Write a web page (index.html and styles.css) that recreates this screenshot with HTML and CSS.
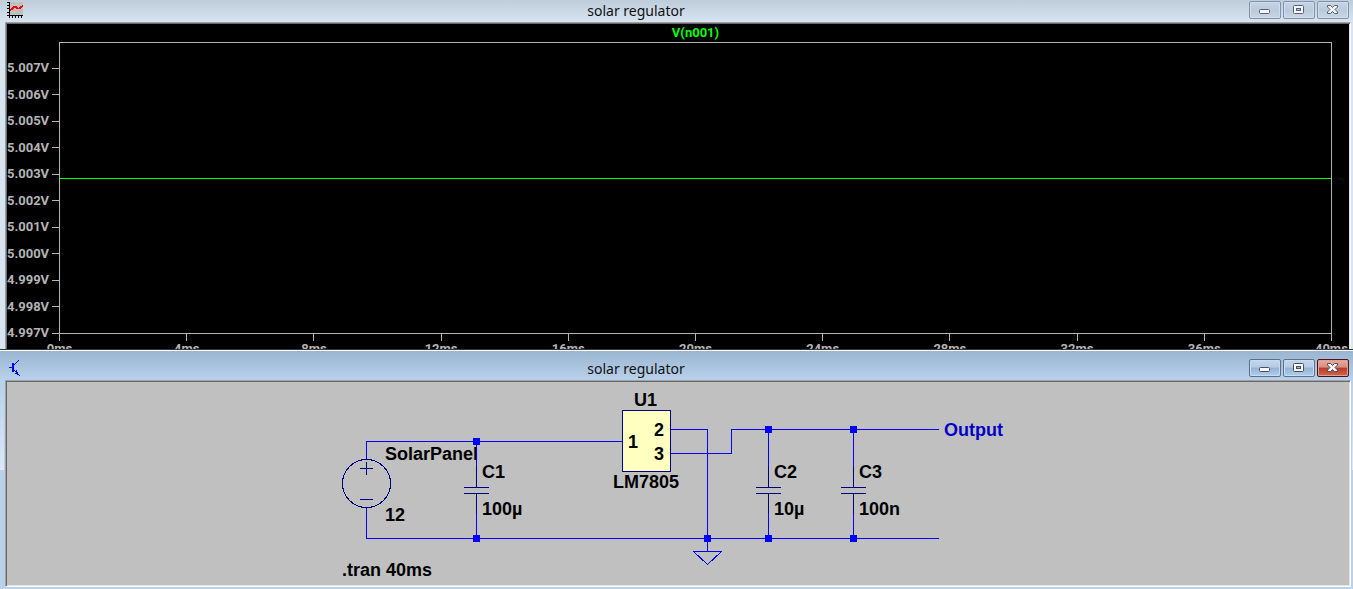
FILE: index.html
```
<!DOCTYPE html>
<html lang="en">
<head>
<meta charset="utf-8">
<title>solar regulator</title>
<link rel="stylesheet" href="styles.css">
</head>
<body>
<section class="window window--plot">
  <header class="titlebar">
    <svg class="icon" width="16" height="16" viewBox="0 0 16 16" shape-rendering="crispEdges" aria-hidden="true">
      <rect x="2" width="14" height="14" fill="#c0c0c0"/>
      <path d="M2 0h1v16h-1zM0 0h2v1h-2zM0 3h2v1h-2zM0 6h2v1h-2zM0 10h2v1h-2zM0 13h16v1H0zM5 14h1v2h-1zM8 14h1v2h-1zM11 14h1v2h-1zM14 14h1v2h-1z" fill="#000"/>
      <path d="M3 7h1v2h-1zM4 6h2v2h-2zM5 5h2v2h-2zM6 4h4v2h-4zM9 5h2v2h-2zM10 6h3v1h-3zM12 5h2v2h-2zM13 4h2v2h-2zM15 3h1v2h-1z" fill="#f00"/>
    </svg>
    <h1 class="title">solar regulator</h1>
    <div class="controls">
      <button class="control" aria-label="Minimize"><svg width="14" height="12" viewBox="0 0 14 12"><rect x="1.500" y="5.500" width="10" height="4" rx="1" fill="#f4f4f4" stroke="#586173"/></svg></button>
      <button class="control" aria-label="Restore"><svg width="14" height="12" viewBox="0 0 14 12"><rect x="1.500" y="1.500" width="10" height="8" rx="1" fill="#f4f4f4" stroke="#586173"/><rect x="4.500" y="4.500" width="4" height="2" fill="#a9bdd4" stroke="#586173"/></svg></button>
      <button class="control" aria-label="Close"><svg width="14" height="12" viewBox="0 0 14 12"><path d="M1.500 1.500H4.500L6.500 3.500L8.500 1.500H11.500V3L9 5.500L11.500 8V9.500H8.500L6.500 7.500L4.500 9.500H1.500V8L4 5.500L1.500 3Z" fill="#f4f4f4" stroke="#586173"/></svg></button>
    </div>
  </header>
  <div class="client plot">
    <h2 class="trace-name">V(n001)</h2>
    <ul class="y-axis">
      <li>5.007V</li><li>5.006V</li><li>5.005V</li><li>5.004V</li><li>5.003V</li><li>5.002V</li><li>5.001V</li><li>5.000V</li><li>4.999V</li><li>4.998V</li><li>4.997V</li>
    </ul>
    <div class="frame">
      <svg class="trace" width="100%" height="100%" role="img" aria-label="V(n001) constant at 5.0028V"><line x1="0" y1="46.700%" x2="100%" y2="46.700%" stroke="#0f0" shape-rendering="crispEdges"/></svg>
    </div>
    <ul class="x-axis">
      <li>0ms</li><li>4ms</li><li>8ms</li><li>12ms</li><li>16ms</li><li>20ms</li><li>24ms</li><li>28ms</li><li>32ms</li><li>36ms</li><li>40ms</li>
    </ul>
  </div>
</section>

<section class="window window--active">
  <header class="titlebar">
    <svg class="icon" width="16" height="16" viewBox="0 0 16 16" shape-rendering="crispEdges" aria-hidden="true">
      <path d="M5 3h2v9h-2zM2 7h3v1h-3zM7 4h1v1h-1zM8 3h1v1h-1zM9 2h1v1h-1zM10 1h1v1h-1zM11 0h1v1h-1zM7 10h1v1h-1zM8 11h2v1h-2zM9 10h1v4h-1zM10 12h1v3h-1zM8 13h3v1h-3zM11 14h1v1h-1zM12 15h1v1h-1z" fill="#00f"/>
    </svg>
    <h1 class="title">solar regulator</h1>
    <div class="controls">
      <button class="control" aria-label="Minimize"><svg width="14" height="12" viewBox="0 0 14 12"><rect x="1.500" y="5.500" width="10" height="4" rx="1" fill="#f8f8f8" stroke="#48505e"/></svg></button>
      <button class="control" aria-label="Restore"><svg width="14" height="12" viewBox="0 0 14 12"><rect x="1.500" y="1.500" width="10" height="8" rx="1" fill="#f8f8f8" stroke="#48505e"/><rect x="4.500" y="4.500" width="4" height="2" fill="#9cb9d8" stroke="#48505e"/></svg></button>
      <button class="control control--close" aria-label="Close"><svg width="14" height="12" viewBox="0 0 14 12"><path d="M1.500 1.500H4.500L6.500 3.500L8.500 1.500H11.500V3L9 5.500L11.500 8V9.500H8.500L6.500 7.500L4.500 9.500H1.500V8L4 5.500L1.500 3Z" fill="#f8f8f8" stroke="#48505e"/></svg></button>
    </div>
  </header>
  <div class="client schematic">
    <svg class="circuit" width="1000" height="203" viewBox="7 382 1000 203" role="img" aria-label="Solar panel regulator circuit">
      <g class="label">
        <text x="385" y="460">SolarPanel</text>
        <text x="385" y="521">12</text>
        <text x="482" y="478">C1</text>
        <text x="482" y="515">100µ</text>
        <text x="634" y="406">U1</text>
        <text x="613" y="488">LM7805</text>
        <text x="774" y="478">C2</text>
        <text x="774" y="515">10µ</text>
        <text x="859" y="478">C3</text>
        <text x="859" y="515">100n</text>
        <text x="342" y="576">.tran 40ms</text>
        <text class="net" x="944" y="436">Output</text>
      </g>
      <path class="wire" d="M366.500 460V441.500H622M366.500 507V538.500H939M671 429.500H707.500V551M671 453.500H731.500V429.500H939M476.500 441V466M476.500 514V538M768.500 429V466M768.500 514V538M853.500 429V466M853.500 514V538"/>
      <path class="wire" d="M693 551.500H722"/>
      <path class="wire" d="M693.500 551.500L707.500 564.500L721.500 551.500"/>
      <path class="part" d="M476.500 466V487M464 487.500H489M464 493.500H489M476.500 493V514M768.500 466V487M756 487.500H781M756 493.500H781M768.500 493V514M853.500 466V487M841 487.500H866M841 493.500H866M853.500 493V514M360 468.500H373M366.500 462V475M360 499.500H373"/>
      <circle class="part" cx="366.500" cy="483.500" r="24"/>
      <rect class="part chip" x="622.500" y="410.500" width="48" height="61"/>
      <g class="label">
        <text x="628" y="448">1</text>
        <text x="654" y="436">2</text>
        <text x="654" y="460">3</text>
      </g>
      <path class="node" d="M473 438h7v7h-7zM473 535h7v7h-7zM704 535h7v7h-7zM765 426h7v7h-7zM765 535h7v7h-7zM850 426h7v7h-7zM850 535h7v7h-7z"/>
    </svg>
  </div>
</section>
</body>
</html>
```
FILE: styles.css
```
* { box-sizing: border-box; }

body {
  margin: 0;
  min-height: 100vh;
  display: flex;
  flex-direction: column;
  font-family: "Noto Sans", sans-serif;
  background: #d7e4f2;
}

h1, h2, ul { margin: 0; padding: 0; list-style: none; }

.window {
  display: flex;
  flex-direction: column;
  padding: 0 2px 0 5px;
  background: #d7e4f2;
}

.window--plot { flex: 1; min-height: 349px; }

.window--active {
  padding-bottom: 2px;
  border-top: 1px solid #333;
  background:
    linear-gradient(#b9d1ea, #dce9f6) 0 32px / 4px 88px no-repeat,
    linear-gradient(#b9d1ea, #dce9f6) 100% 32px / 1px 88px no-repeat,
    linear-gradient(#99b4d1, #b9d1ea) 0 0 / 100% 30px no-repeat,
    #b9d1ea;
  box-shadow: inset 0 1px #fff;
}

.window--plot {
  background: linear-gradient(#bfcddb, #d7e4f2) 0 0 / 100% 22px no-repeat, #d7e4f2;
}

.titlebar {
  display: flex;
  align-items: center;
  height: 22px;
  padding: 0 2px;
}

.window--active .titlebar { height: 30px; padding-top: 8px; }

.icon { flex: none; margin-bottom: 2px; }

.title {
  flex: 1;
  text-align: center;
  font-size: 14px;
  font-weight: 400;
  line-height: 22px;
  color: #111;
}

.controls { display: flex; gap: 2px; margin-bottom: 2px; }

.control {
  display: flex;
  align-items: center;
  justify-content: center;
  width: 32px;
  height: 18px;
  padding: 0;
  border: 1px solid #8292af;
  border-radius: 2px;
  background: linear-gradient(#c7d5e4, #bccbdc 50%, #b9c9db 50%, #c9d8e8);
  box-shadow: inset 0 0 0 1px #cfdceb;
}

.window--active .control {
  border-color: #5d6f8c;
  background: linear-gradient(#c3d7ec, #b3cbe4 45%, #94b3d4 50%, #b0cfec);
  box-shadow: inset 0 0 0 1px #c8dcf0;
}

.window--active .control--close {
  border-color: #431422;
  background: linear-gradient(#e8aca0, #d98c80 45%, #b83b25 50%, #d0664f);
  box-shadow: inset 0 0 0 1px #e2a091;
}

.client {
  flex: 1;
  border: 1px solid;
  border-color: #a0a0a0 #fff #fff #a0a0a0;
}

.plot {
  display: grid;
  grid-template: 18px 1fr 15px / 52px 1fr 17px;
  border-bottom: 0;
  background: #000;
  color: #b4b4b4;
  font: 700 13px/16px Roboto, sans-serif;
  box-shadow: inset 1px 1px #696969, inset -1px 0 #e3e3e3;
  padding: 1px 1px 0;
  overflow: hidden;
}

.trace-name {
  grid-area: 1 / 2;
  text-align: center;
  font-size: 13px;
  font-weight: 700;
  line-height: 18px;
  color: #0f0;
}

.y-axis {
  grid-area: 2 / 1;
  display: flex;
  flex-direction: column;
  justify-content: space-between;
  margin: 18px 0 -7px;
}

.y-axis li {
  display: flex;
  align-items: center;
  justify-content: space-between;
}

.y-axis li::after { content: ""; width: 7px; height: 1px; background: #b4b4b4; }

.frame { grid-area: 2 / 2; border: 1px solid #b4b4b4; }

.trace { display: block; }

.x-axis {
  grid-area: 3 / 2;
  display: flex;
  justify-content: space-between;
}

.x-axis li {
  display: flex;
  flex-direction: column;
  align-items: center;
  width: 1px;
  white-space: nowrap;
}

.x-axis li::before { content: ""; flex: none; width: 1px; height: 7px; background: #b4b4b4; }

.schematic {
  padding: 1px;
  background: #c0c0c0;
  box-shadow: inset 1px 1px #696969, inset -1px -1px #e3e3e3;
}

.circuit { display: block; }

.label { font: 700 18px "Liberation Sans", Arial, sans-serif; fill: #000; }
.net { fill: #0000c8; }

.wire { fill: none; stroke: #00f; shape-rendering: crispEdges; }
.part { fill: none; stroke: #000080; shape-rendering: crispEdges; }
.part.chip { fill: #ffffc0; }
.node { fill: #00f; }
```
